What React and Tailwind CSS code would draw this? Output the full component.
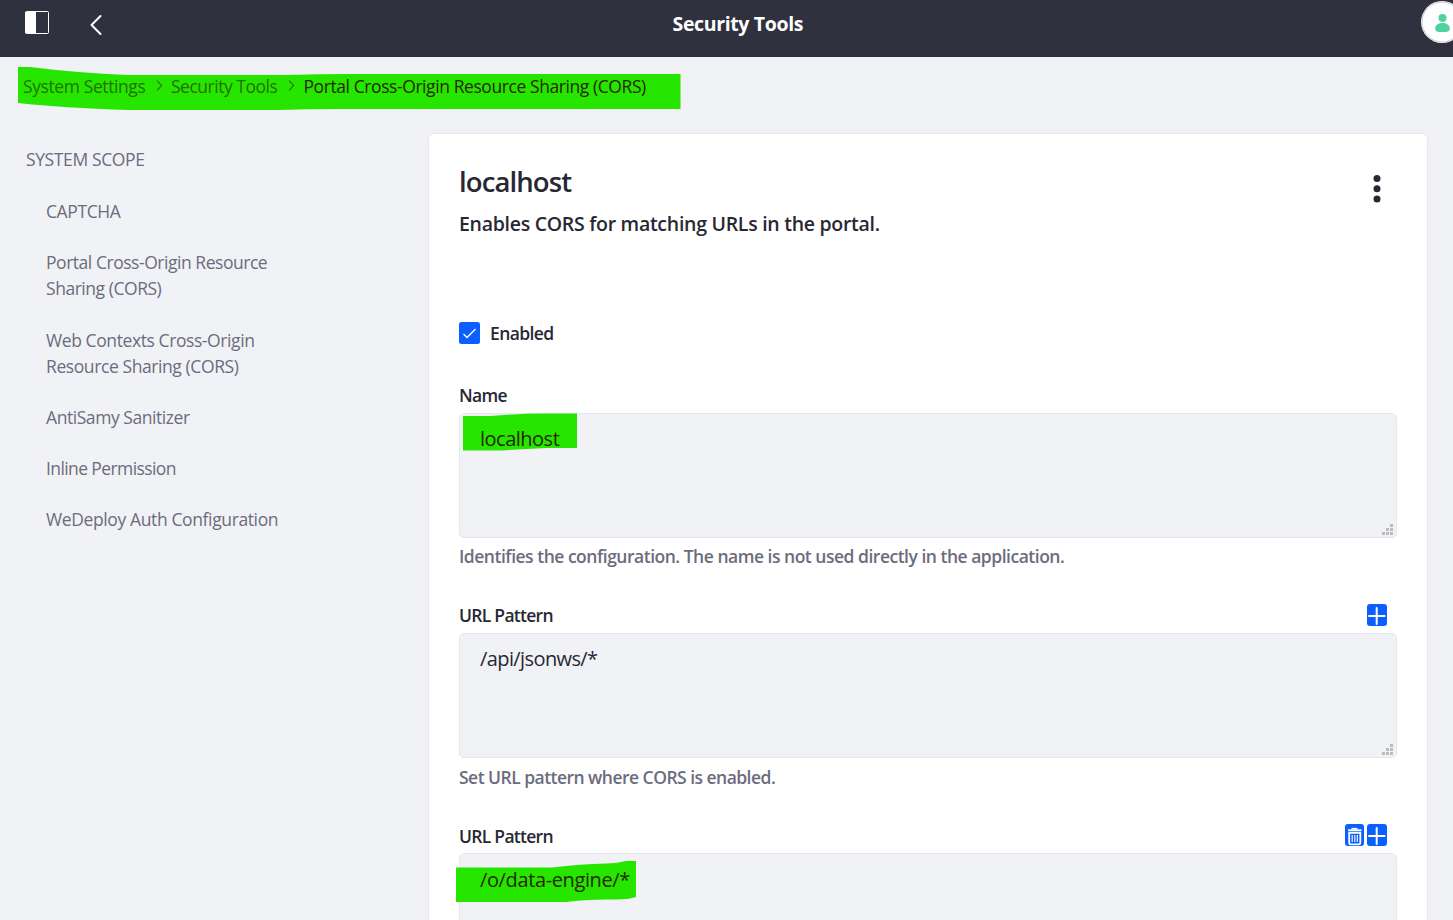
import React from "react";

const sidebarItems = [
  { lines: ["CAPTCHA"], style: "tracking-[-0.4px]" },
  { lines: ["Portal Cross-Origin Resource", "Sharing (CORS)"], style: "tracking-[-0.46px]" },
  { lines: ["Web Contexts Cross-Origin", "Resource Sharing (CORS)"], style: "tracking-[-0.41px]" },
  { lines: ["AntiSamy Sanitizer"], style: "tracking-[-0.44px]" },
  { lines: ["Inline Permission"], style: "tracking-[-0.6px]" },
  { lines: ["WeDeploy Auth Configuration"], style: "tracking-[-0.38px]" },
];

function Chevron() {
  return (
    <svg className="h-[12px] w-[7px]" viewBox="0 0 7 12" fill="none" stroke="#247800" strokeWidth="1.1">
      <path d="M1 .7 5.7 5.5 1 10.3" />
    </svg>
  );
}

function PlusButton() {
  return (
    <button className="h-[22px] w-[20px] rounded-[3px] bg-[#0b5fff]" aria-label="Add">
      <svg className="h-[22px] w-[20px]" viewBox="0 0 20 22" fill="none" stroke="#fff" strokeWidth="2" strokeLinecap="round">
        <path d="M2 12h15.500M9.700 4v16" />
      </svg>
    </button>
  );
}

function TrashButton() {
  return (
    <button className="h-[22px] w-[19px] rounded-[3px] bg-[#0b5fff]" aria-label="Delete">
      <svg className="h-[22px] w-[19px]" viewBox="0 0 19 22" fill="none" stroke="#fff">
        <path d="M6.5 4.7h6" strokeWidth="1.6" />
        <path d="M3 6.3h13.5" strokeWidth="2" />
        <path d="M4.2 8.8v10.2q0 1.4 1.4 1.4h8.3q1.4 0 1.4-1.4V8.8z" strokeWidth="1.8" />
        <path d="M7.2 11v7M9.8 11v7M12.3 11v7" strokeWidth="1.1" />
      </svg>
    </button>
  );
}

function Area({ children }) {
  return (
    <div className="relative h-[125px] shrink-0 rounded-[5px] border border-[#e7e7ed] bg-[#f1f2f5] pl-[20px] pt-[11px] text-[20px] leading-[28px] text-[#272833]">
      {children}
      <svg className="absolute bottom-[2px] right-[3px] h-[11px] w-[11px]" viewBox="0 0 11 11" fill="#bcbcbc">
        <path d="M8 0h3v3H8zM4 4h3v3H4zM8 4h3v3H8zM0 8h3v3H0zM4 8h3v3H4zM8 8h3v3H8z" />
      </svg>
    </div>
  );
}

export default function App() {
  return (
    <div className="flex h-[920px] w-[1453px] flex-col overflow-hidden bg-[#f1f2f5] font-['Open_Sans',sans-serif] text-[17.5px] leading-[26px] text-[#6b6c7e]">
      <header className="flex h-[57px] shrink-0 bg-[#30313f] pl-[25px]">
        <svg className="mt-[11px] h-[23px] w-[24px] shrink-0" viewBox="0 0 24 23">
          <rect x=".5" y=".5" width="23" height="22" rx="1" fill="none" stroke="#fff" />
          <path d="M0 1h11v21H0z" fill="#fff" />
        </svg>
        <svg className="ml-[41px] mt-[14px] h-[22px] w-[13px] shrink-0" viewBox="0 0 13 22" fill="none" stroke="#fff" strokeWidth="2" strokeLinecap="round" strokeLinejoin="round">
          <path d="M10.500 2 1.500 11l9 9" />
        </svg>
        <h1 className="ml-[569.5px] mt-[10px] w-[748.500px] shrink-0 whitespace-nowrap text-[19.5px] font-bold leading-[27px] tracking-[-0.36px] text-white">Security Tools</h1>
        <svg className="mt-[1px] h-[42px] w-[42px] shrink-0" viewBox="0 0 42 42">
          <circle cx="21" cy="21" r="21" fill="#fff" />
          <circle cx="21" cy="21" r="20" fill="none" stroke="#b9bac6" strokeWidth=".8" />
          <circle cx="21.5" cy="17" r="4" fill="#50d2a0" />
          <path d="M14.2 27.5c0-3.5 3.2-5.5 7.3-5.5s7.3 2 7.3 5.5-3.5 3.6-7.3 3.6-7.3 0-7.3-3.6z" fill="#50d2a0" />
        </svg>
      </header>

      <nav className="relative h-[76px] shrink-0 pl-[23px] pt-[16px]">
        <svg className="absolute left-[18px] top-[10px] h-[43px] w-[663px]" viewBox="0 0 663 43" fill="#26e600">
          <path d="M0 0h12Q60 6 110 8h160q30-1 60-1h332.500v35H320q-30 0-60 1H110Q45 41 0 36z" />
        </svg>
        <div className="relative flex items-center whitespace-nowrap text-[#247000]">
          <span className="w-[133px] tracking-[-0.4px]">System Settings</span>
          <Chevron />
          <span className="ml-[8px] w-[117px] tracking-[-0.48px]">Security Tools</span>
          <Chevron />
          <span className="ml-[8.500px] tracking-[-0.42px] text-[#272800]">Portal Cross-Origin Resource Sharing (CORS)</span>
        </div>
      </nav>

      <div className="flex min-h-0 flex-1">
        <aside className="w-[428px] shrink-0 pl-[26px] pt-[13px]">
          <div className="tracking-[-0.38px]">SYSTEM SCOPE</div>
          <ul className="ml-[20px] mt-[26px] flex flex-col gap-[25px] whitespace-nowrap leading-[26.2px]">
            {sidebarItems.map((item) => (
              <li key={item.lines[0]} className={item.style}>
                {item.lines.map((line) => (
                  <div key={line}>{line}</div>
                ))}
              </li>
            ))}
          </ul>
        </aside>

        <main className="flex h-[850px] w-[1000px] shrink-0 flex-col whitespace-nowrap rounded-[5px] border border-[#e7e7ed] bg-white px-[30px] pt-[28px] text-[#272833]">
          <div className="flex h-[160px] shrink-0 justify-between">
            <div>
              <h2 className="text-[27.5px] font-semibold leading-[40px] tracking-[-0.9px]">localhost</h2>
              <p className="mt-[9px] text-[19.5px] font-semibold tracking-[-0.28px]">Enables CORS for matching URLs in the portal.</p>
            </div>
            <svg className="mr-[16.500px] mt-[13px] h-[28px] w-[8px]" viewBox="0 0 8 28" fill="#272833">
              <circle cx="4" cy="3.5" r="3.5" />
              <circle cx="4" cy="13.7" r="3.5" />
              <circle cx="4" cy="24" r="3.5" />
            </svg>
          </div>
          <label className="flex h-[22px] shrink-0 items-center gap-[10px] font-semibold tracking-[-0.6px]">
            <svg className="h-[22px] w-[21px]" viewBox="0 0 21 22">
              <rect width="21" height="22" rx="2.5" fill="#0b5fff" />
              <path d="m4.5 12 3.5 3.5 8.5-8.5" fill="none" stroke="#fff" strokeWidth="1.3" />
            </svg>
            <span>Enabled</span>
          </label>
          <div className="mt-[38px] h-[31px] shrink-0 font-semibold tracking-[-0.7px]">Name</div>
          <Area>
            <svg className="absolute left-[3px] top-[-1px] h-[38px] w-[115px]" viewBox="0 0 115 38" fill="#26e600">
              <path d="M0 3h28Q60 0 90 0.500h24v34.500H84Q60 36 38 37.500H0z" />
            </svg>
            <span className="relative tracking-[-0.5px] text-[#272800]">localhost</span>
          </Area>
          <div className="mt-[5px] h-[59px] shrink-0 font-semibold tracking-[-0.49px] text-[#6b6c7e]">Identifies the configuration. The name is not used directly in the application.</div>
          <div className="flex h-[31px] shrink-0 justify-between">
            <span className="font-semibold tracking-[-0.72px]">URL Pattern</span>
            <div className="mr-[10px] mt-[2px] flex gap-[3px]"><PlusButton /></div>
          </div>
          <Area><span className="tracking-[-0.6px]">/api/jsonws/*</span></Area>
          <div className="mt-[6px] h-[59px] shrink-0 font-semibold tracking-[-0.53px] text-[#6b6c7e]">Set URL pattern where CORS is enabled.</div>
          <div className="flex h-[30px] shrink-0 justify-between">
            <span className="font-semibold tracking-[-0.72px]">URL Pattern</span>
            <div className="mr-[10px] mt-[1px] flex gap-[3px]"><TrashButton /><PlusButton /></div>
          </div>
          <Area>
            <svg className="absolute left-[-4px] top-[7px] h-[42px] w-[181px]" viewBox="0 0 181 42" fill="#26e600">
              <path d="M0 6.500h96Q125 3 150 2.500q10 0 20-2.500h10v36q-7 2.500-20 2.500-30-.5-50 2.500H0z" />
            </svg>
            <span className="relative top-[1px] tracking-[-0.38px] text-[#272800]">/o/data-engine/*</span>
          </Area>
        </main>
      </div>
    </div>
  );
}
